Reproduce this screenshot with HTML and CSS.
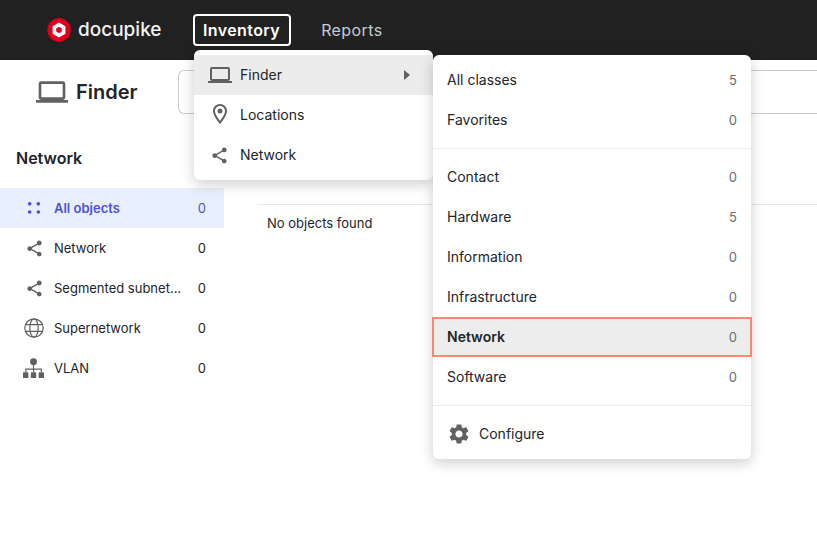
FILE: index.html
```html
<!DOCTYPE html>
<html lang="en">
<head>
    <meta charset="UTF-8">
    <meta name="viewport" content="width=device-width, initial-scale=1.0">
    <title>Finder</title>
    <link rel="stylesheet" href="styles.css">
</head>
<body>

	<header class="topbar">
		<a class="logo">
			<svg class="logo-mark" viewBox="0 0 24 24" width="24" height="24">
				<circle cx="12" cy="12" r="11.7" fill="#e2001a"/>
				<path d="M12 4.6l6.4 3.7v7.4L12 19.4l-6.4-3.7V8.3z" fill="#fff"/>
				<path d="M12 8.8l2.8 1.6v3.2L12 15.2l-2.8-1.6v-3.2z" fill="#e2001a"/>
			</svg>
			<span class="logo-text">docupike</span>
		</a>
		<nav class="topnav">
			<a class="topnav-link active">Inventory</a>
			<a class="topnav-link">Reports</a>
		</nav>
	</header>

	<div class="titlebar">
		<svg class="title-icon" viewBox="0 0 24 24" width="32" height="32"><path d="M20 18c1.1 0 1.99-.9 1.99-2L22 6c0-1.1-.9-2-2-2H4c-1.1 0-2 .9-2 2v10c0 1.1.9 2 2 2H0v2h24v-2h-4zM4 6h16v10H4V6z"/></svg>
		<h1>Finder</h1>
		<div class="searchbox"></div>
	</div>

	<main class="content">
		<aside class="sidebar">
			<h2>Network</h2>
			<ul class="side-list">
				<li class="side-item current">
					<svg viewBox="0 0 24 24" width="20" height="20" class="side-icon"><circle cx="6.8" cy="7" r="2.2"/><circle cx="17.2" cy="7" r="2.2"/><circle cx="6.8" cy="16.8" r="2.2"/><circle cx="17.2" cy="16.8" r="2.2"/></svg>
					<span class="side-label">All objects</span><span class="side-count">0</span>
				</li>
				<li class="side-item">
					<svg viewBox="0 0 24 24" width="19" height="19" class="side-icon share"><path d="M18 16.08c-.76 0-1.44.3-1.96.77L8.91 12.7c.05-.23.09-.46.09-.7s-.04-.47-.09-.7l7.05-4.11c.54.5 1.25.81 2.04.81 1.66 0 3-1.34 3-3s-1.34-3-3-3-3 1.34-3 3c0 .24.04.47.09.7L8.04 9.81C7.5 9.31 6.79 9 6 9c-1.66 0-3 1.34-3 3s1.34 3 3 3c.79 0 1.5-.31 2.04-.81l7.12 4.16c-.05.21-.08.43-.08.65 0 1.61 1.31 2.92 2.92 2.92s2.92-1.31 2.92-2.92-1.31-2.92-2.92-2.92z"/></svg>
					<span class="side-label">Network</span><span class="side-count">0</span>
				</li>
				<li class="side-item">
					<svg viewBox="0 0 24 24" width="19" height="19" class="side-icon share"><path d="M18 16.08c-.76 0-1.44.3-1.96.77L8.91 12.7c.05-.23.09-.46.09-.7s-.04-.47-.09-.7l7.05-4.11c.54.5 1.25.81 2.04.81 1.66 0 3-1.34 3-3s-1.34-3-3-3-3 1.34-3 3c0 .24.04.47.09.7L8.04 9.81C7.5 9.31 6.79 9 6 9c-1.66 0-3 1.34-3 3s1.34 3 3 3c.79 0 1.5-.31 2.04-.81l7.12 4.16c-.05.21-.08.43-.08.65 0 1.61 1.31 2.92 2.92 2.92s2.92-1.31 2.92-2.92-1.31-2.92-2.92-2.92z"/></svg>
					<span class="side-label">Segmented subnet...</span><span class="side-count">0</span>
				</li>
				<li class="side-item">
					<svg viewBox="0 0 20 20" width="20" height="20" class="side-icon line"><circle cx="10" cy="10" r="9.2"/><ellipse cx="10" cy="10" rx="4.2" ry="9.2"/><path d="M1.6 6.6h16.8M1.6 13.4h16.8"/></svg>
					<span class="side-label">Supernetwork</span><span class="side-count">0</span>
				</li>
				<li class="side-item">
					<svg viewBox="0 0 22 22" width="21" height="21" class="side-icon org"><circle cx="11" cy="3.8" r="3.6"/><path d="M10.4 6h1.2v5h8.2v4h-1.2v-2.8h-6.9V15h-1.2v-2.8H3.6V15H2.4v-4h8z"/><rect x="0" y="15" width="5.6" height="6" rx=".6"/><rect x="8.2" y="15" width="5.6" height="6" rx=".6"/><rect x="16.4" y="15" width="5.6" height="6" rx=".6"/></svg>
					<span class="side-label">VLAN</span><span class="side-count">0</span>
				</li>
			</ul>
		</aside>
		<section class="results">
			<p class="empty">No objects found</p>
		</section>
	</main>

	<!-- dropdowns lie over the page -->
	<div class="menu menu-main">
		<a class="menu-item open">
			<svg viewBox="0 0 24 24" width="24" height="24"><path d="M20 18c1.1 0 1.99-.9 1.99-2L22 6c0-1.1-.9-2-2-2H4c-1.1 0-2 .9-2 2v10c0 1.1.9 2 2 2H0v2h24v-2h-4zM4 6h16v10H4V6z"/></svg>
			<span class="menu-label">Finder</span>
			<span class="caret"></span>
		</a>
		<a class="menu-item">
			<svg viewBox="0 0 24 24" width="24" height="24" class="menu-pin"><path d="M12 2C8.13 2 5 5.13 5 9c0 5.25 7 13 7 13s7-7.75 7-13c0-3.87-3.13-7-7-7zM7 9c0-2.76 2.24-5 5-5s5 2.24 5 5c0 2.88-2.88 7.19-5 9.88C9.92 16.21 7 11.85 7 9z"/><circle cx="12" cy="9" r="2.5"/></svg>
			<span class="menu-label">Locations</span>
		</a>
		<a class="menu-item">
			<svg viewBox="0 0 24 24" width="19" height="19" class="menu-share"><path d="M18 16.08c-.76 0-1.44.3-1.96.77L8.91 12.7c.05-.23.09-.46.09-.7s-.04-.47-.09-.7l7.05-4.11c.54.5 1.25.81 2.04.81 1.66 0 3-1.34 3-3s-1.34-3-3-3-3 1.34-3 3c0 .24.04.47.09.7L8.04 9.81C7.5 9.31 6.79 9 6 9c-1.66 0-3 1.34-3 3s1.34 3 3 3c.79 0 1.5-.31 2.04-.81l7.12 4.16c-.05.21-.08.43-.08.65 0 1.61 1.31 2.92 2.92 2.92s2.92-1.31 2.92-2.92-1.31-2.92-2.92-2.92z"/></svg>
			<span class="menu-label">Network</span>
		</a>
	</div>

	<div class="menu menu-sub">
		<a class="sub-item"><span class="sub-label">All classes</span><span class="sub-count">5</span></a>
		<a class="sub-item"><span class="sub-label">Favorites</span><span class="sub-count">0</span></a>
		<hr class="sub-line">
		<a class="sub-item"><span class="sub-label">Contact</span><span class="sub-count">0</span></a>
		<a class="sub-item"><span class="sub-label">Hardware</span><span class="sub-count">5</span></a>
		<a class="sub-item"><span class="sub-label">Information</span><span class="sub-count">0</span></a>
		<a class="sub-item"><span class="sub-label">Infrastructure</span><span class="sub-count">0</span></a>
		<a class="sub-item selected"><span class="sub-label">Network</span><span class="sub-count">0</span></a>
		<a class="sub-item"><span class="sub-label">Software</span><span class="sub-count">0</span></a>
		<hr class="sub-line">
		<a class="sub-item configure">
			<svg viewBox="0 0 24 24" width="24" height="24"><path d="M19.14 12.94c.04-.3.06-.61.06-.94 0-.32-.02-.64-.07-.94l2.03-1.58c.18-.14.23-.41.12-.61l-1.92-3.32c-.12-.22-.37-.29-.59-.22l-2.39.96c-.5-.38-1.03-.7-1.62-.94l-.36-2.54c-.04-.24-.24-.41-.48-.41h-3.84c-.24 0-.43.17-.47.41l-.36 2.54c-.59.24-1.13.57-1.62.94l-2.39-.96c-.22-.08-.47 0-.59.22L2.74 8.87c-.12.21-.08.47.12.61l2.03 1.58c-.05.3-.09.63-.09.94s.02.64.07.94l-2.03 1.58c-.18.14-.23.41-.12.61l1.92 3.32c.12.22.37.29.59.22l2.39-.96c.5.38 1.03.7 1.62.94l.36 2.54c.05.24.24.41.48.41h3.84c.24 0 .44-.17.47-.41l.36-2.54c.59-.24 1.13-.56 1.62-.94l2.39.96c.22.08.47 0 .59-.22l1.92-3.32c.12-.22.07-.47-.12-.61l-2.01-1.58zM12 15.6c-1.98 0-3.6-1.62-3.6-3.6s1.62-3.6 3.6-3.6 3.6 1.62 3.6 3.6-1.62 3.6-3.6 3.6z"/></svg>
			<span class="sub-label">Configure</span>
		</a>
	</div>

</body>
</html>
```

FILE: styles.css
```css
body {
	margin: 0;
	min-height: 554px;
	overflow: hidden;
	position: relative;
	background-color: #fff;
	color: #212529;
	font-family: Inter, "Liberation Sans", sans-serif;
	font-size: 14px;
}

svg {
	fill: #616161;
	flex-shrink: 0;
}

/* top bar */
.topbar {
	display: flex;
	align-items: center;
	height: 60px;
	padding-left: 47px;
	box-sizing: border-box;
	background-color: #212121;
}

.logo {
	display: flex;
	align-items: center;
	gap: 7px;
	width: 146px;
}

.logo-text {
	color: #f2f2f2;
	font-size: 19px;
	font-weight: 500;
	line-height: 24px;
}

.topnav {
	display: flex;
	align-items: center;
	gap: 30px;
}

.topnav-link {
	color: #c4ccd4;
	font-size: 16px;
	letter-spacing: 0.4px;
	line-height: 28px;
}

.topnav-link.active {
	padding: 0 9px 0 8px;
	border: 2px solid #fff;
	border-radius: 4px;
	color: #fff;
	font-weight: 600;
}

/* page title */
.titlebar {
	display: flex;
	align-items: center;
	height: 64px;
	padding-left: 36px;
}

.title-icon {
	margin-right: 8px;
}

h1 {
	margin: 0;
	width: 102px;
	font-size: 20px;
	font-weight: 600;
}

.searchbox {
	flex: 1;
	height: 42px;
	border: 1px solid #ccc;
	border-right: 0;
	border-radius: 6px 0 0 6px;
}

/* sidebar + result list */
.content {
	display: flex;
}

.sidebar {
	width: 224px;
}

h2 {
	margin: 24px 0 20px 16px;
	font-size: 16px;
	line-height: 20px;
	font-weight: 600;
}

.side-list {
	margin: 0;
	padding: 0;
	list-style: none;
}

.side-item {
	display: flex;
	align-items: center;
	height: 40px;
	padding: 0 18px 0 24px;
	font-size: 13px;
}

.side-icon {
	margin-right: 10px;
}

.side-icon.share {
	margin: 0 10px 0 1px;
}

.side-icon.line {
	fill: none;
	stroke: #616161;
	stroke-width: 1.2;
}

.side-icon.org {
	margin: 0 10px 0 -1px;
}

.side-label {
	flex: 1;
}

.side-item.current {
	background-color: #e8effc;
	color: #4f50d8;
	font-weight: 600;
}

.side-item.current svg {
	fill: #4f50d8;
}

.side-item.current .side-count {
	font-weight: 400;
}

.results {
	flex: 1;
	margin-left: 33px;
	margin-top: 80px;
	border-top: 1px solid #e9e9e9;
}

.empty {
	margin: 10px 0 0 10px;
	font-size: 13px;
	line-height: 17px;
}

/* dropdown menus */
.menu {
	position: absolute;
	background-color: #fff;
	border-radius: 6px;
	box-shadow: 0 4px 14px rgba(0, 0, 0, 0.2);
	font-size: 14px;
}

.menu-main {
	left: 194px;
	top: 50px;
	width: 239px;
	padding: 5px 0;
}

.menu-item {
	display: flex;
	align-items: center;
	height: 40px;
	padding: 0 14px;
	gap: 8px;
}

.menu-pin {
	margin-bottom: 2px;
}

.menu-share {
	margin: 0 3px 0 2px;
}

.menu-label {
	flex: 1;
	margin-bottom: 2px;
}

.menu-item.open {
	background-color: #ececec;
}

.caret {
	margin-right: 9px;
	border-left: 6px solid #616161;
	border-top: 5px solid transparent;
	border-bottom: 5px solid transparent;
}

.menu-sub {
	left: 433px;
	top: 55px;
	width: 318px;
	padding: 5px 0;
}

.sub-item {
	display: flex;
	align-items: center;
	justify-content: space-between;
	height: 40px;
	padding: 0 14px;
}

.sub-label {
	margin-bottom: 2px;
}

.sub-count {
	color: #6c6c6c;
	font-size: 13px;
}

.sub-item.selected {
	background-color: #ededed;
	font-weight: 600;
	margin: 0 -1px;
	padding: 0 15px;
	outline: 2px solid #fa8673;
	outline-offset: -2px;
}

.sub-item.selected .sub-count {
	font-weight: 400;
}

.sub-line {
	height: 1px;
	margin: 8px 0;
	border: 0;
	background-color: #ebebeb;
}

.sub-item.configure {
	justify-content: flex-start;
	gap: 8px;
}

.sub-item.configure svg {
	margin-bottom: 1px;
}
```
